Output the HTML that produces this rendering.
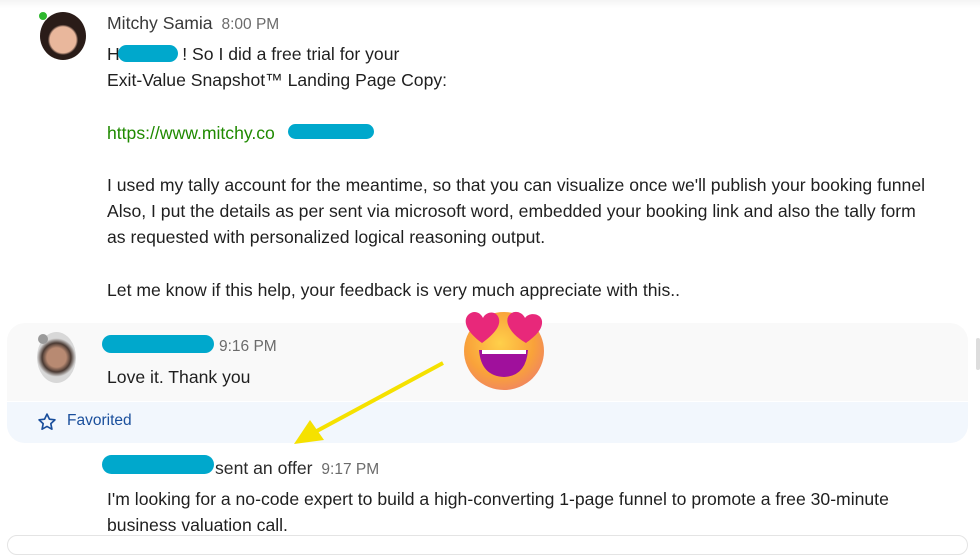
<!DOCTYPE html>
<html><head><meta charset="utf-8"><style>
*{margin:0;padding:0;box-sizing:border-box}
body{width:980px;height:543px;overflow:hidden;background:#fff;font-family:"Liberation Sans",Arial,sans-serif;color:#1f1f1f;position:relative;font-size:17.6px}
.a{position:absolute;white-space:nowrap}
.t{color:#6b6b6b;font-size:15.5px}
.blob{position:absolute;background:#00a8cc;border-radius:10px}
</style></head><body>
<div class="a" style="left:0;top:0;width:980px;height:8px;background:linear-gradient(#f4f4f4,#fff)"></div>
<div class="a" style="left:40px;top:12px;width:46px;height:48px;border-radius:50%;background:radial-gradient(circle at 50% 58%,#e9b79c 0 36%,#2a1c18 42%)"></div>
<div class="a" style="left:38px;top:11px;width:10px;height:10px;border-radius:50%;background:#2eb82e;border:1px solid #fff"></div>
<div class="a" style="left:107px;top:13px;color:#3a3a3a">Mitchy Samia <span class="t" style="margin-left:4px">8:00 PM</span></div>
<div class="a" style="left:107px;top:44px">Hi&nbsp;&nbsp;&nbsp;&nbsp;&nbsp;&nbsp;&nbsp;&nbsp;&nbsp;&nbsp;&nbsp;&nbsp;! So I did a free trial for your</div>
<div class="blob" style="left:118px;top:45px;width:60px;height:17px"></div>
<div class="a" style="left:107px;top:70px">Exit-Value Snapshot™ Landing Page Copy:</div>
<div class="a" style="left:107px;top:123px;color:#1f8a00">https://www.mitchy.co</div>
<div class="blob" style="left:288px;top:124px;width:86px;height:15px"></div>
<div class="a" style="left:107px;top:175px">I used my tally account for the meantime, so that you can visualize once we'll publish your booking funnel</div>
<div class="a" style="left:107px;top:201px">Also, I put the details as per sent via microsoft word, embedded your booking link and also the tally form</div>
<div class="a" style="left:107px;top:227px">as requested with personalized logical reasoning output.</div>
<div class="a" style="left:107px;top:280px">Let me know if this help, your feedback is very much appreciate with this..</div>

<div class="a" style="left:7px;top:323px;width:961px;height:120px;border-radius:18px;background:#f9f9f9;overflow:hidden">
 <div class="a" style="left:0;top:78px;width:961px;height:42px;background:#f2f7fd;border-top:1px solid #fff"></div>
</div>
<div class="a" style="left:37px;top:332px;width:39px;height:51px;border-radius:50%;background:radial-gradient(circle at 50% 50%,#b88a72 0 30%,#4a3a33 45%,#d8d8d8 60%)"></div>
<div class="a" style="left:38px;top:334px;width:10px;height:10px;border-radius:50%;background:#9a9a9a"></div>
<div class="blob" style="left:102px;top:335px;width:112px;height:18px"></div>
<div class="a t" style="left:219px;top:338px">9:16 PM</div>
<div class="a" style="left:107px;top:367px">Love it. Thank you</div>
<svg class="a" style="left:37px;top:412px" width="20" height="20" viewBox="0 0 24 24"><path d="M12 2.5l2.9 6.1 6.6.8-4.9 4.6 1.3 6.6L12 17.3l-5.9 3.3 1.3-6.6-4.9-4.6 6.6-.8z" fill="none" stroke="#1a4f9c" stroke-width="2" stroke-linejoin="round"/></svg>
<div class="a" style="left:67px;top:412px;font-size:15.5px;color:#1a4f9c">Favorited</div>

<div class="blob" style="left:102px;top:455px;width:112px;height:19px"></div>
<div class="a" style="left:215px;top:458px;color:#2a2a2a">sent an offer <span class="t" style="margin-left:4px">9:17 PM</span></div>
<div class="a" style="left:107px;top:489px">I'm looking for a no-code expert to build a high-converting 1-page funnel to promote a free 30-minute</div>
<div class="a" style="left:107px;top:515px">business valuation call.</div>
<div class="a" style="left:7px;top:535px;width:961px;height:20px;border:1px solid #e4e4e4;border-radius:12px;background:#fff"></div>
<div class="a" style="left:976px;top:338px;width:4px;height:32px;background:#ddd;border-radius:2px"></div>

<svg class="a" style="left:0;top:0" width="980" height="543">
 <line x1="443" y1="363" x2="315" y2="432" stroke="#f5e100" stroke-width="4"/>
 <polygon points="294,444 310,420 324,440" fill="#f5e100"/>
 <defs><radialGradient id="f" cx="45%" cy="40%" r="60%"><stop offset="0" stop-color="#ffd04a"/><stop offset=".7" stop-color="#f9a23a"/><stop offset="1" stop-color="#f28a5a"/></radialGradient></defs>
 <ellipse cx="504" cy="351" rx="40" ry="39" fill="url(#f)"/>
 <path d="M479 350 H528 Q526 376 504 377 Q481 376 479 350Z" fill="#a0109c"/>
 <rect x="482" y="350" width="44" height="4" fill="#fff"/>
 <path d="M482 343 C468 333 462 322 468 315 C474 309 481 313 483 318 C486 311 497 310 499 319 C501 328 490 337 482 343Z" fill="#e8287a"/>
 <path d="M526 343 C512 335 505 324 508 317 C512 309 522 311 525 318 C529 312 541 313 542 321 C543 330 534 337 526 343Z" fill="#e8287a"/>
</svg>
</body></html>
